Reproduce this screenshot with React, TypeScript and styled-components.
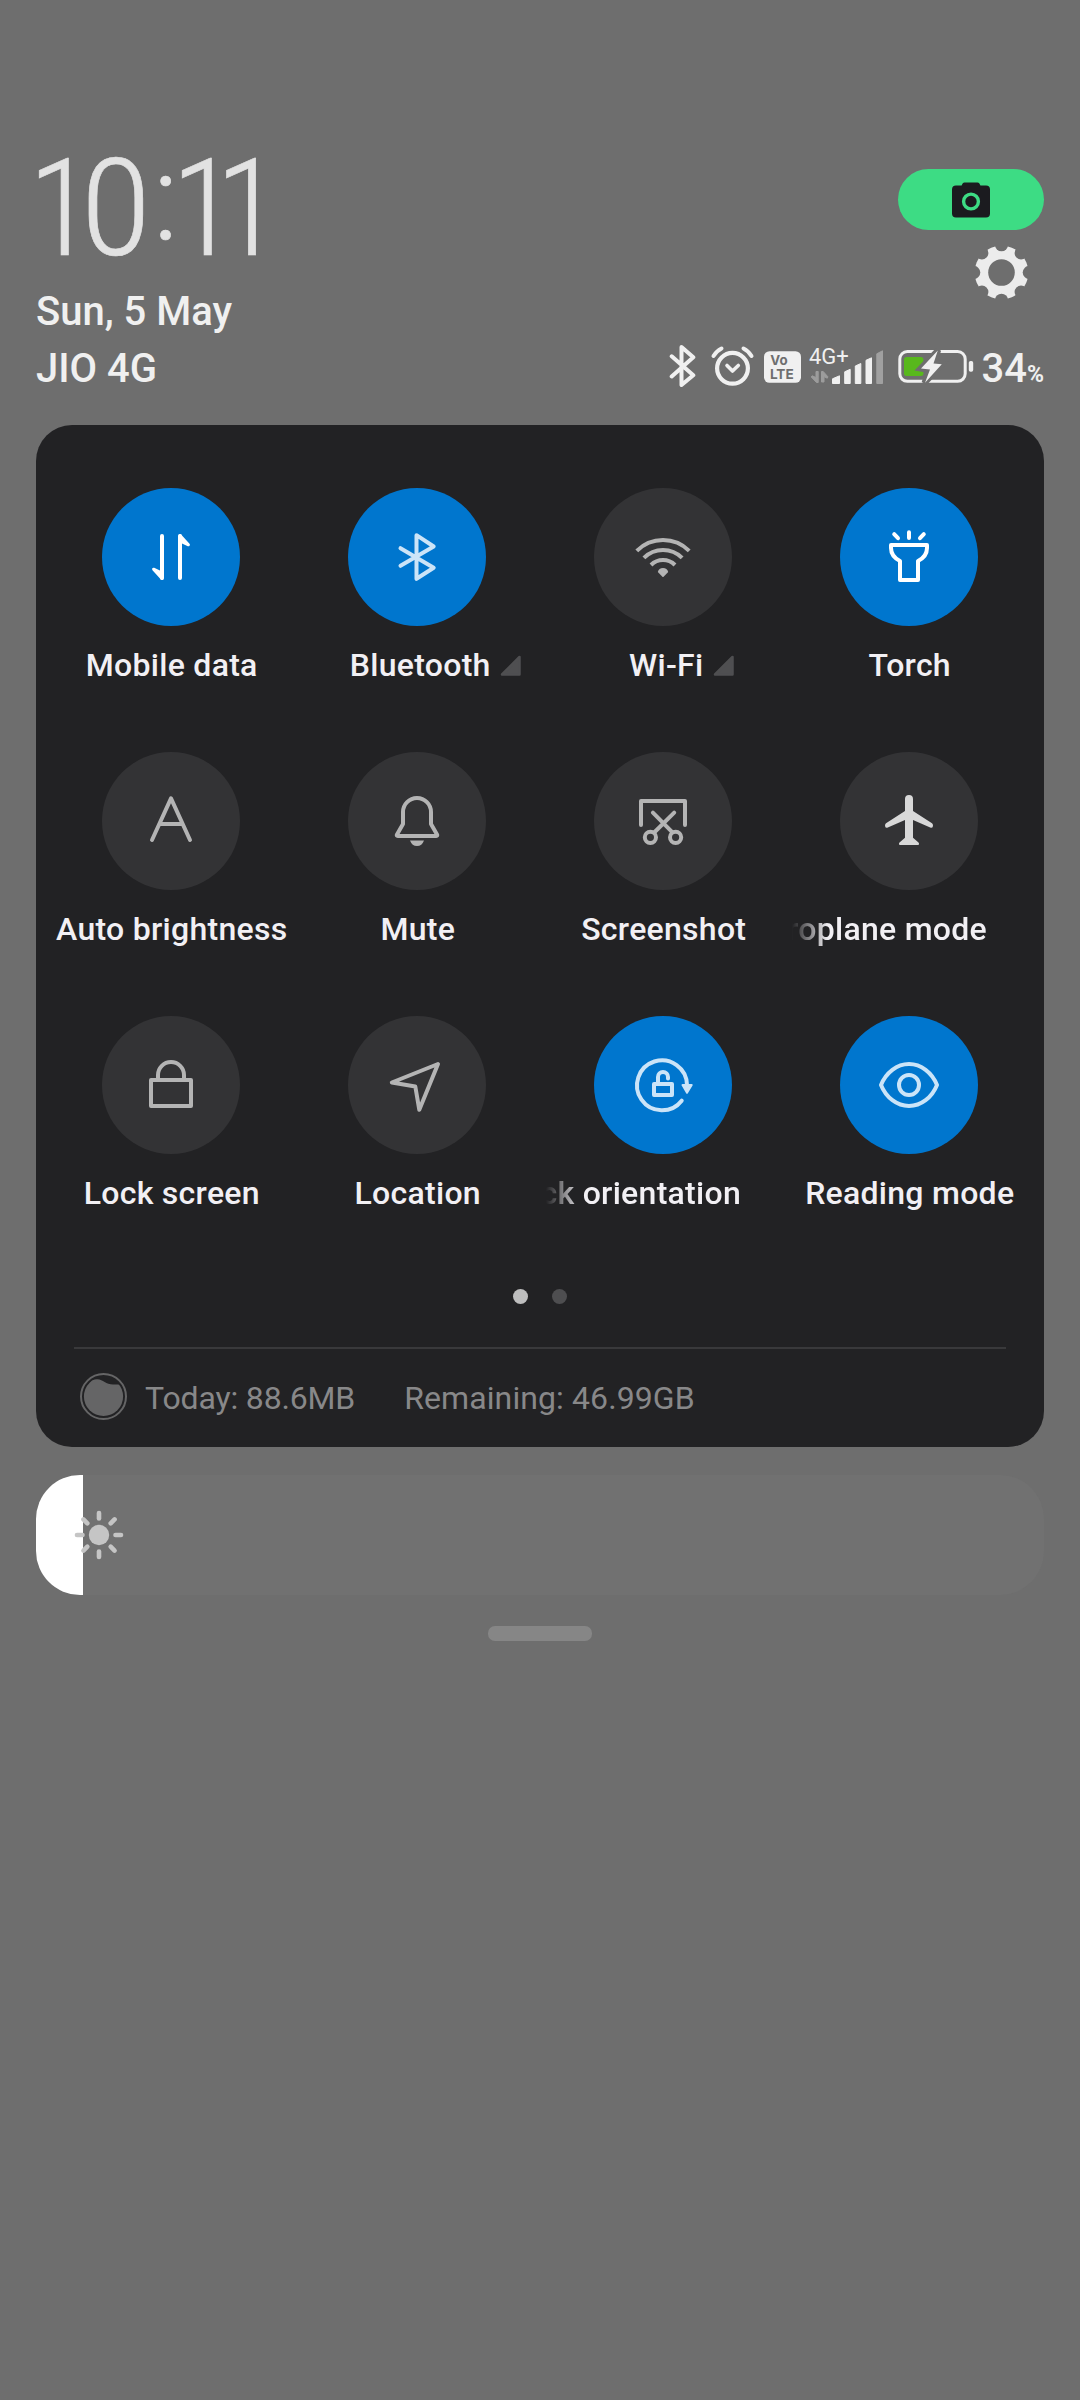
import React from 'react';
import styled, { createGlobalStyle, css } from 'styled-components';

const color = {
  wall: '#6e6e6e',
  panel: '#222224',
  off: '#333335',
  on: '#0076ce',
  label: '#f2f0f4',
  status: '#f0f0f0',
  iconOff: '#b4b4b4',
  iconSoft: '#cbe4f8',
};

const GlobalStyle = createGlobalStyle`
  *, *::before, *::after { box-sizing: border-box; }
  body { margin: 0; background: ${color.wall}; }
  svg { display: block; flex: none; }
`;

const Shade = styled.main`
  width: 1080px;
  height: 2400px;
  padding: 141px 36px 0;
  overflow: hidden;
  background: ${color.wall};
  color: ${color.status};
  font-family: Roboto, 'Liberation Sans', sans-serif;
`;

const Row = styled.div`
  display: flex;
  justify-content: space-between;
`;

const Clock = styled.div`
  height: 136px;
  margin: 0 0 6px -8px;
  color: #e2e2e2;
  font: 300 136px/136px 'Roboto Condensed', Roboto, sans-serif;
  -webkit-text-stroke: 0.6px #e2e2e2;
  white-space: nowrap;
`;

const Digit = styled.span<{ $track: number; $wide?: boolean }>`
  letter-spacing: ${(p) => p.$track}px;
  ${(p) =>
    p.$wide &&
    css`
      display: inline-block;
      transform: scaleX(1.07);
    `}
`;

const Colon = styled.span`
  font-size: 121px;
  line-height: 0;
  letter-spacing: -6px;
  vertical-align: 16px;
`;

const HeaderLine = styled.div`
  font-size: 40px;
  font-weight: 500;
  line-height: 57px;
`;

const Shortcuts = styled.div`
  display: flex;
  flex-direction: column;
  align-items: flex-end;
  gap: 16px;
  padding-top: 28px;
`;

const CameraPill = styled.div`
  display: flex;
  align-items: center;
  justify-content: center;
  width: 146px;
  height: 61px;
  border-radius: 31px;
  background: #3ddc84;
`;

const GearSlot = styled.div`
  padding-right: 16px;
`;

const StatusBar = styled.div`
  display: flex;
  align-items: flex-start;
  height: 57px;
`;

const BatteryText = styled.div`
  padding-left: 7.6px;
  font-size: 40px;
  font-weight: 500;
  line-height: 57px;
  white-space: nowrap;
`;

const Percent = styled.span`
  font-size: 23px;
  font-weight: 700;
`;

const Panel = styled.section`
  margin-top: 28px;
  height: 1022px;
  padding-top: 63px;
  border-radius: 36px;
  background: ${color.panel};
`;

const Tiles = styled.div`
  display: grid;
  grid-template-columns: repeat(4, 246px);
  grid-auto-rows: 264px;
  padding: 0 12px;
`;

const Tile = styled.div`
  display: flex;
  flex-direction: column;
  align-items: center;
`;

const Disc = styled.div<{ $on?: boolean; $ink: string }>`
  width: 138px;
  height: 138px;
  border-radius: 50%;
  background: ${(p) => (p.$on ? color.on : color.off)};
  color: ${(p) => p.$ink};
`;

const Label = styled.div<{ $more?: boolean; $scrolled?: boolean }>`
  display: flex;
  align-items: center;
  justify-content: center;
  margin-top: 19px;
  padding-left: 1.5px;
  color: ${color.label};
  font-size: 32px;
  font-weight: 500;
  line-height: 40px;
  letter-spacing: 0.28px;
  white-space: nowrap;
  ${(p) =>
    p.$more &&
    css`
      gap: 9.5px;
      padding-left: 37px;
    `}
  ${(p) =>
    p.$scrolled &&
    css`
      width: 234px;
      justify-content: flex-end;
      padding-right: 39px;
      overflow: hidden;
      mask-image: linear-gradient(to right, transparent, #000 36px);
    `}
`;

const Dots = styled.div`
  display: flex;
  justify-content: center;
  gap: 24px;
  margin-top: 9px;
`;

const Dot = styled.span<{ $current?: boolean }>`
  width: 15px;
  height: 15px;
  border-radius: 50%;
  background: ${(p) => (p.$current ? '#bebebe' : '#4e4e50')};
`;

const Usage = styled.div`
  display: flex;
  align-items: center;
  height: 100px;
  margin: 43px 38px 0;
  padding-left: 6px;
  border-top: 2px solid #39393b;
  color: #888889;
  font-size: 32px;
`;

const UsageGauge = styled.div`
  margin-bottom: 3px;
`;

const UsageText = styled.span<{ $gap: number; $track?: number }>`
  margin-left: ${(p) => p.$gap}px;
  letter-spacing: ${(p) => p.$track ?? 0}px;
  white-space: nowrap;
`;

const Slider = styled.div`
  display: flex;
  height: 120px;
  margin-top: 28px;
  border-radius: 44px;
  overflow: hidden;
  background: #717171;
`;

const SliderFill = styled.div`
  width: 47px;
  background: #fff;
`;

const SliderIcon = styled.div`
  display: flex;
  align-items: center;
  margin-left: -9px;
`;

const Handle = styled.div`
  width: 104px;
  height: 15px;
  margin: 31px auto 0;
  border-radius: 7px;
  background: #868686;
`;

/* ---------- header icons ---------- */

const CameraIcon = () => (
  <svg width="38" height="36" viewBox="0 0 38 36">
    <path fill="#1b1b1f" d="M4 3.6h5.6l1-2Q11.300 .5 12.600 .5h12.800q1.300 0 2 1.100l1 2H34a4 4 0 0 1 4 4v24a4 4 0 0 1-4 4H4a4 4 0 0 1-4-4v-24a4 4 0 0 1 4-4z" />
    <circle cx="19" cy="19.500" r="7.400" fill="none" stroke="#3ddc84" strokeWidth="3.400" />
  </svg>
);

const GearIcon = () => (
  <svg width="53" height="53" viewBox="-26.500 -26.500 53 53">
    <mask id="gear-cut">
      <circle r="26.800" fill="#fff" />
      <circle r="13.300" fill="#000" />
      {[0, 45, 90, 135, 180, 225, 270, 315].map((a) => (
        <circle key={a} cy="-27.700" r="6.500" fill="#000" transform={`rotate(${a})`} />
      ))}
    </mask>
    <rect x="-27" y="-27" width="54" height="54" fill="#ececec" mask="url(#gear-cut)" />
  </svg>
);

const BluetoothStatus = () => (
  <svg width="36" height="57" viewBox="668 340 36 57" fill="none" stroke={color.status} strokeWidth="4" strokeLinecap="round" strokeLinejoin="round">
    <path d="M670.700 356.300 692.300 375.300 680.500 385V347L692.300 357.300 670.700 376.500" />
  </svg>
);

const AlarmStatus = () => (
  <svg width="56" height="57" viewBox="704 340 56 57" fill="none" stroke={color.status} strokeWidth="4" strokeLinecap="round" strokeLinejoin="round">
    <circle cx="731.500" cy="368.300" r="15.400" strokeWidth="4.200" />
    <path strokeWidth="3.600" d="m726 365.500 5.500 5.500 5.800-5.500" />
    <path d="M712.500 356q3-5 8-7.500M742.500 348.500q5 2.500 8 7.500" />
  </svg>
);

const VolteStatus = () => (
  <svg width="46" height="57" viewBox="760 340 46 57" fontFamily="Inter, Roboto, sans-serif" fontWeight="700" fill={color.wall}>
    <rect x="763" y="351.200" width="37" height="31.600" rx="5.500" fill={color.status} />
    <text x="769.300" y="365" fontSize="13.300">Vo</text>
    <text x="768.900" y="378.800" fontSize="13.600">LTE</text>
  </svg>
);

const SignalStatus = () => (
  <svg width="86" height="57" viewBox="806 340 86 57" fill={color.status} strokeLinejoin="round">
    <text x="808" y="364" fontFamily="Roboto, sans-serif" fontSize="22">4G+</text>
    <g fill="#9c9c9c" stroke="#9c9c9c" strokeWidth="1">
      <path d="M815 371.500h2.200v11h-1.700l-5.200-5.500.8-1.200 3.900 1.700z" />
      <path d="M820.500 382v-10.500h1.700l4.700 5.300-.6 1.400-3.300-1.500v5.300z" />
    </g>
    <g strokeWidth="1" stroke={color.status}>
      <path d="M831.500 383.500v-4.700l7-3v7.700z" />
      <path d="M843.700 383.500v-11.700l5.500-2.500v14.200z" />
      <path d="M854.300 383.500v-17.500l5.500-2.500v20z" />
      <path d="M865 383.500v-23.200l5.500-2.500v25.700z" />
    </g>
    <path d="M875.800 383.500v-29.700l5.700-3v32.700z" fill="#a0a0a0" stroke="#a0a0a0" strokeWidth="1" />
  </svg>
);

const BatteryStatus = () => (
  <svg width="81" height="57" viewBox="893 340 81 57">
    <rect x="899.800" y="351.500" width="65.400" height="29.800" rx="7.500" fill="none" stroke={color.status} strokeWidth="3" />
    <rect x="904" y="357" width="19.400" height="19" rx="2.500" fill="#58b81c" />
    <path d="M938.200 350 920.500 368.500 929 370 924.500 383 942.500 364 934.300 363z" fill={color.wall} stroke={color.wall} strokeWidth="6" />
    <path d="M937.800 350.500 921 368.500 930 369.600 925 382.700 941.800 364.300 933.500 363.500z" fill={color.status} />
    <rect x="968.800" y="361" width="4.400" height="10.800" rx="1.800" fill={color.status} />
  </svg>
);

/* ---------- tile icons, drawn on the full 138px disc ---------- */

const Glyph = ({ children }: { children: React.ReactNode }) => (
  <svg width="138" height="138" viewBox="0 0 138 138" fill="none" stroke="currentColor" strokeWidth="4" strokeLinecap="round" strokeLinejoin="round">
    {children}
  </svg>
);

const MobileData = () => (
  <Glyph>
    <path d="M60 48v42M78 90V48" />
    <path fill="currentColor" strokeWidth="3" d="M51.600 81.200 60 85v5.500zM86.400 56.800 78 53v-5.500z" />
  </Glyph>
);
const Bluetooth = () => (
  <Glyph>
    <path d="M52.500 60.200 85.700 79.800 68.500 90.800V47.200L85.700 58.500 52.500 77.800" />
  </Glyph>
);
const Wifi = () => (
  <Glyph>
    <g strokeLinecap="butt">
      <path d="M42.800 62.800a37 37 0 0 1 52.400 0M49.900 69.900a27 27 0 0 1 38.200 0M57 77a17 17 0 0 1 24 0" />
    </g>
    <path fill="currentColor" stroke="none" d="M63.800 84Q64.800 80 69 80t5.200 4L69.600 88.700q-.6.600-1.200 0z" />
  </Glyph>
);
const Torch = () => (
  <Glyph>
    <path d="M69 44.200v5.800M54.200 46.200l3.800 4M83.800 46.200l-3.800 4" />
    <path d="M51 57h36v3c0 6-3 10-9 13v19H60V73c-6-3-9-7-9-13z" />
  </Glyph>
);
const AutoBrightness = () => (
  <Glyph>
    <polyline points="50,88 69,46.300 88,88" />
    <line x1="58" y1="72" x2="80" y2="72" />
  </Glyph>
);
const Bell = () => (
  <Glyph>
    <path d="M55 60a14 14 0 0 1 28 0v12l6 10.500q.8 1.500-.8 1.500H49.800q-1.600 0-.8-1.500L55 72z" />
    <path fill="currentColor" stroke="none" d="M62 88.500h14q-2 5.500-7 5.500t-7-5.500z" />
  </Glyph>
);
const Scissors = () => (
  <Glyph>
    <path d="M47 73V49h44v24M58.900 60.600l19.300 19.600M80.200 60.600 60.700 80" />
    <circle cx="56.400" cy="85.300" r="5.600" />
    <circle cx="81.600" cy="85.300" r="5.600" />
  </Glyph>
);
const Plane = () => (
  <Glyph>
    <path
      fill="currentColor"
      stroke="none"
      d="M65 47a4 4 0 0 1 8 0v12l19 12.300q1 .800 1 2.200 0 3-2.800 2L73 68v17.700l5.500 4.800q1.500 2.500-.8 2.500H60.300q-2.300 0-.8-2.500l5.500-4.800V68l-17.200 7.500q-2.800 1-2.800-2 0-1.400 1-2.200L65 59z"
    />
  </Glyph>
);
const Lock = () => (
  <Glyph>
    <path d="M49 64h40v26H49zM56 64v-5a13 13 0 0 1 26 0v5" />
  </Glyph>
);
const Location = () => (
  <Glyph>
    <path d="M90 48 43.800 66.500 67.300 70.500 71.300 93.800z" />
  </Glyph>
);
const Orientation = () => (
  <Glyph>
    <path d="M93 69A25 25 0 1 0 87.700 84.700" />
    <path fill="currentColor" strokeWidth="2" d="M88.500 69h9.200L93 76.800z" />
    <path d="M60 68h18v11H60zM64 68v-7a5 5 0 0 1 10 0v1.500" />
  </Glyph>
);
const Eye = () => (
  <Glyph>
    <path d="M41 69C46 56.500 57 48 69 48s23 8.500 28 21C92 81.500 81 90 69 90S46 81.500 41 69z" />
    <circle cx="69" cy="69" r="10" />
  </Glyph>
);

const MoreMark = () => (
  <svg width="21" height="21" viewBox="0 0 21 21">
    <path d="M2 19.500 19.500 2v17.500z" fill="#4f4f51" stroke="#4f4f51" strokeWidth="2.500" strokeLinejoin="round" />
  </svg>
);

const GaugeIcon = () => (
  <svg width="47" height="47" viewBox="0 0 47 47">
    <clipPath id="gauge-level">
      <path d="M0 14 8 10.500C11 7 14 6 17.500 6.200 23 6.700 26 11.300 33 11.500h14V47H0z" />
    </clipPath>
    <circle cx="23.500" cy="23.500" r="22.500" fill="none" stroke="#656566" strokeWidth="2" />
    <circle cx="23.500" cy="23.500" r="19.600" fill="#656566" clipPath="url(#gauge-level)" />
  </svg>
);

const SunIcon = () => (
  <svg width="50" height="50" viewBox="-25 -25 50 50">
    <circle r="10.200" fill="#c5c5c5" />
    {[0, 45, 90, 135, 180, 225, 270, 315].map((a) => (
      <line key={a} y1="-16.500" y2="-22" stroke="#c5c5c5" strokeWidth="4.600" strokeLinecap="round" transform={`rotate(${a})`} />
    ))}
  </svg>
);

type TileSpec = {
  name: string;
  icon: () => React.ReactElement;
  on?: boolean;
  ink?: string;
  more?: boolean;
  scrolled?: boolean;
};

const tiles: TileSpec[] = [
  { name: 'Mobile data', icon: MobileData, on: true, ink: '#ffffff' },
  { name: 'Bluetooth', icon: Bluetooth, on: true, ink: color.iconSoft, more: true },
  { name: 'Wi-Fi', icon: Wifi, more: true },
  { name: 'Torch', icon: Torch, on: true, ink: '#ffffff' },
  { name: 'Auto brightness', icon: AutoBrightness },
  { name: 'Mute', icon: Bell },
  { name: 'Screenshot', icon: Scissors },
  { name: 'Aeroplane mode', icon: Plane, ink: '#d8d8d8', scrolled: true },
  { name: 'Lock screen', icon: Lock },
  { name: 'Location', icon: Location },
  { name: 'Lock orientation', icon: Orientation, on: true, ink: color.iconSoft, scrolled: true },
  { name: 'Reading mode', icon: Eye, on: true, ink: color.iconSoft },
];

export default function App() {
  return (
    <>
      <GlobalStyle />
      <Shade>
        <header>
          <Row>
            <div>
              <Clock>
                <Digit $track={-11.1}>1</Digit>
                <Digit $track={3.5} $wide>0</Digit>
                <Colon>:</Colon>
                <Digit $track={-22.1}>1</Digit>
                <Digit $track={0}>1</Digit>
              </Clock>
              <HeaderLine>Sun, 5 May</HeaderLine>
            </div>
            <Shortcuts>
              <CameraPill>
                <CameraIcon />
              </CameraPill>
              <GearSlot>
                <GearIcon />
              </GearSlot>
            </Shortcuts>
          </Row>
          <Row>
            <HeaderLine>JIO 4G</HeaderLine>
            <StatusBar>
              <BluetoothStatus />
              <AlarmStatus />
              <VolteStatus />
              <SignalStatus />
              <BatteryStatus />
              <BatteryText>
                34<Percent>%</Percent>
              </BatteryText>
            </StatusBar>
          </Row>
        </header>

        <Panel>
          <Tiles>
            {tiles.map(({ name, icon: Icon, on, ink = color.iconOff, more, scrolled }) => (
              <Tile key={name}>
                <Disc $on={on} $ink={ink}>
                  <Icon />
                </Disc>
                <Label $more={more} $scrolled={scrolled}>
                  {name}
                  {more && <MoreMark />}
                </Label>
              </Tile>
            ))}
          </Tiles>
          <Dots>
            <Dot $current />
            <Dot />
          </Dots>
          <Usage>
            <UsageGauge>
              <GaugeIcon />
            </UsageGauge>
            <UsageText $gap={18} $track={-0.15}>Today: 88.6MB</UsageText>
            <UsageText $gap={49} $track={0.1}>Remaining: 46.99GB</UsageText>
          </Usage>
        </Panel>

        <Slider>
          <SliderFill />
          <SliderIcon>
            <SunIcon />
          </SliderIcon>
        </Slider>
        <Handle />
      </Shade>
    </>
  );
}
